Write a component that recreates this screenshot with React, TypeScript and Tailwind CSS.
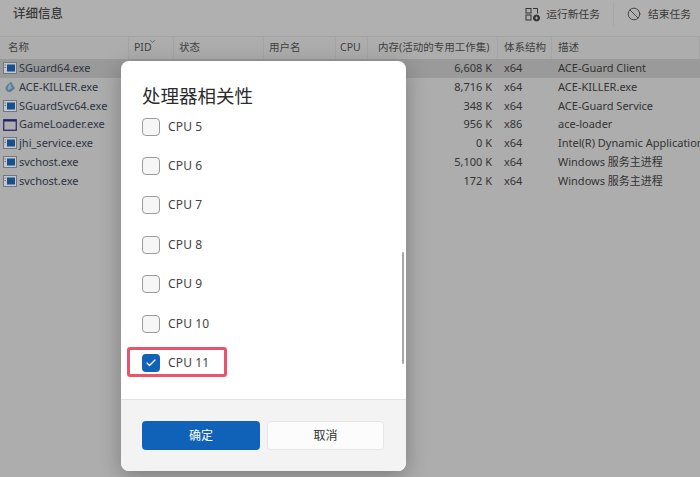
import { Check, ChevronUp, Ban } from "lucide-react";

const columns = [
  { label: "名称", width: "w-[129px]", cls: "pl-2" },
  { label: "PID", width: "w-[45px]", cls: "pl-[5px]" },
  { label: "状态", width: "w-[90px]", cls: "pl-[5px]" },
  { label: "用户名", width: "w-[72px]", cls: "pl-[5px]" },
  { label: "CPU", width: "w-[32px]", cls: "pl-1" },
  { label: "内存(活动的专用工作集)", width: "w-[130px]", cls: "pl-[10px]" },
  { label: "体系结构", width: "w-[54px]", cls: "pl-[6px]" },
  { label: "描述", width: "flex-1", cls: "pl-[6px]" },
];

const rows = [
  { name: "SGuard64.exe", mem: "6,608 K", arch: "x64", desc: "ACE-Guard Client", icon: "app" },
  { name: "ACE-KILLER.exe", mem: "8,716 K", arch: "x64", desc: "ACE-KILLER.exe", icon: "drop" },
  { name: "SGuardSvc64.exe", mem: "348 K", arch: "x64", desc: "ACE-Guard Service", icon: "app" },
  { name: "GameLoader.exe", mem: "956 K", arch: "x86", desc: "ace-loader", icon: "window" },
  { name: "jhi_service.exe", mem: "0 K", arch: "x64", desc: "Intel(R) Dynamic Application", icon: "app" },
  { name: "svchost.exe", mem: "5,100 K", arch: "x64", desc: "Windows 服务主进程", icon: "app" },
  { name: "svchost.exe", mem: "172 K", arch: "x64", desc: "Windows 服务主进程", icon: "app" },
];

const cpus = ["CPU 5", "CPU 6", "CPU 7", "CPU 8", "CPU 9", "CPU 10"];

function RowIcon({ kind }: { kind: string }) {
  if (kind === "drop") {
    return (
      <svg width="14" height="14" viewBox="0 0 14 14" aria-hidden>
        <path d="M8 1.5 C7 3 3 5 2.5 8 C2.5 11 5 12.5 7.5 12 L12 8.5 C11 6 9 4 8 1.5Z" fill="#5d7f96" />
        <path d="M7 3.5 C6 5 4.5 7 5 10 L9 8Z" fill="#8aa6b8" />
      </svg>
    );
  }
  if (kind === "window") {
    return (
      <svg width="14" height="14" viewBox="0 0 14 14" aria-hidden>
        <rect x="0.75" y="1.75" width="12.5" height="10.5" fill="none" stroke="#20206e" strokeWidth="1.2" />
        <rect x="1" y="2" width="12" height="1.5" fill="#20206e" />
      </svg>
    );
  }
  return (
    <svg width="14" height="14" viewBox="0 0 14 14" aria-hidden>
      <rect x="0.5" y="1.5" width="13" height="11" fill="#c4c8cc" stroke="#6f7780" />
      <rect x="4" y="3.5" width="8" height="7" fill="#17508c" />
      <rect x="1.5" y="3.5" width="1.5" height="1" fill="#6f7780" />
      <rect x="1.5" y="6" width="1.5" height="1" fill="#6f7780" />
    </svg>
  );
}

function CpuRow({ label, checked }: { label: string; checked?: boolean }) {
  return (
    <div className="relative flex h-[39.4px] items-center gap-2">
      {checked ? (
        <span className="flex h-[18px] w-[18px] items-center justify-center rounded-[4px] bg-[#0f62b8]">
          <Check size={12} strokeWidth={2.5} className="text-white" />
        </span>
      ) : (
        <span className="h-[18px] w-[18px] rounded-[4px] border border-[#9b9b9b] bg-[#f6f6f6]" />
      )}
      <span className="text-[12px] tracking-[0.15px] text-[#444]">{label}</span>
      {checked && (
        <span className="absolute left-[-15px] top-[4px] h-[30px] w-[100px] rounded-[3px] border-[3px] border-[#e9546b]" />
      )}
    </div>
  );
}

export default function App() {
  return (
    <div className="relative h-[477px] w-[700px] overflow-hidden bg-[#adadad] font-['Noto_Sans','Noto_Sans_CJK_SC',sans-serif] text-[#333]">
      <div className="flex h-[36px] items-center bg-[#b0b0b0] pb-[8px] pl-[13px] pr-[9px]">
        <h1 className="text-[12.5px] font-medium text-[#3a3a3a]">详细信息</h1>
        <div className="ml-auto flex items-center text-[#3a3a3a]">
          <svg width="15" height="15" viewBox="0 0 15 15" fill="none" stroke="#333" strokeWidth="1" aria-hidden>
            <rect x="1" y="1.5" width="5" height="4.5" />
            <rect x="1" y="8" width="5" height="5" />
            <path d="M8 1.5h4.5v5" />
            <circle cx="11.5" cy="11" r="3" fill="#333" />
            <path d="M10 11h3M11.5 9.5v3" stroke="#b0b0b0" />
          </svg>
          <span className="ml-[6px] text-[10.75px]">运行新任务</span>
          <span className="mx-[13px] h-[24px] w-px bg-[#a6a6a6]" />
          <Ban size={14} strokeWidth={1.5} />
          <span className="ml-[7px] text-[10.75px]">结束任务</span>
        </div>
      </div>

      <div className="relative flex h-[23px] border-t border-[#a4a4a4] bg-[#adadad] text-[10.5px] text-[#3f3f3f]">
        {columns.map((col) => (
          <div key={col.label} className={`${col.width} ${col.cls} flex items-center whitespace-nowrap border-r border-[#a4a4a4] last:border-r-0`}>
            {col.label}
          </div>
        ))}
        <ChevronUp size={9} className="absolute left-[148px] top-0 rotate-180 text-[#555]" />
      </div>

      <div className="text-[11px]">
        {rows.map((row, i) => (
          <div key={i} className={`flex h-[18.75px] items-center whitespace-nowrap ${i === 0 ? "bg-[#9a9a9a]" : ""}`}>
            <div className="flex w-[368px] items-center gap-[2px] pl-[3px] text-[#2e3442]">
              <RowIcon kind={row.icon} />
              {row.name}
            </div>
            <div className="w-[124px] text-right">{row.mem}</div>
            <div className="w-[66px] pl-[12px]">{row.arch}</div>
            <div className="flex-1 overflow-hidden">{row.desc}</div>
          </div>
        ))}
      </div>

      <div className="absolute left-[121px] top-[61px] flex h-[410px] w-[285px] flex-col overflow-hidden rounded-[8px] bg-white shadow-[0_6px_22px_rgba(0,0,0,0.28)]">
        <div className="relative flex-1 pl-[21px] pt-[25px]">
          <h2 className="mb-[1px] text-[18.5px] leading-[20px] text-[#2c2c2c]">处理器相关性</h2>
          {cpus.map((cpu) => (
            <CpuRow key={cpu} label={cpu} />
          ))}
          <CpuRow label="CPU 11" checked />
          <span className="absolute right-[2px] top-[191px] h-[112px] w-[2px] rounded-full bg-[#a5a5a5]" />
        </div>
        <div className="flex h-[72px] gap-[7px] border-t border-[#e3e3e3] bg-[#f3f3f3] pl-[21px] pt-[21px]">
          <button type="button" className="h-[29px] w-[118px] rounded-[4px] bg-[#0f62b8] text-[12px] text-white">确定</button>
          <button type="button" className="h-[29px] w-[117px] rounded-[4px] border border-[#e6e6e6] bg-[#fcfcfc] text-[12px] text-[#333]">取消</button>
        </div>
      </div>
    </div>
  );
}
